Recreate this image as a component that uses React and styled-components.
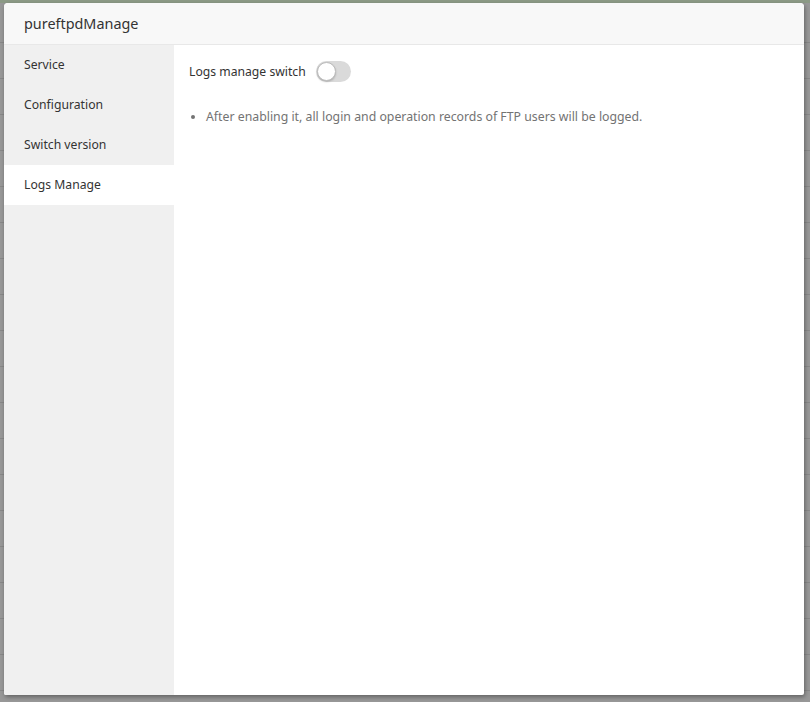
import React, { useState } from "react";
import styled, { createGlobalStyle } from "styled-components";

const GlobalStyle = createGlobalStyle`
  html, body {
    margin: 0;
    padding: 0;
    height: 100%;
  }
  body {
    font-family: "Noto Sans", "Open Sans", Arial, sans-serif;
    background: #989898;
    overflow: hidden;
  }
`;

const Backdrop = styled.div`
  width: 810px;
  height: 702px;
  box-sizing: border-box;
  padding: 3px 6px 7px 4px;
  background-color: #989898;
  background-image: linear-gradient(#8c9a86, #8c9a86),
    repeating-linear-gradient(
      to bottom,
      transparent 0px,
      transparent 35px,
      #888 35px,
      #888 36px
    );
  background-size: 100% 3px, 100% 100%;
  background-position: 0 0, 0 7px;
  background-repeat: no-repeat, repeat;
`;

const Modal = styled.div`
  height: 100%;
  display: flex;
  flex-direction: column;
  background: #fff;
  border-radius: 4px 4px 2px 2px;
  overflow: hidden;
  box-shadow: 1px 2px 4px rgba(0, 0, 0, 0.35);
`;

const Header = styled.div`
  height: 41px;
  flex-shrink: 0;
  display: flex;
  align-items: center;
  padding: 0 20px;
  background: #f8f8f8;
  border-bottom: 1px solid #e8e8e8;
  font-size: 14.4px;
  color: #333;
`;

const Body = styled.div`
  flex: 1;
  display: flex;
  min-height: 0;
`;

const Sidebar = styled.div`
  width: 170px;
  flex-shrink: 0;
  background: #f0f0f0;
  display: flex;
  flex-direction: column;
`;

const NavItem = styled.div`
  height: 40px;
  display: flex;
  align-items: center;
  padding-left: 20px;
  padding-bottom: 1px;
  box-sizing: border-box;
  font-size: 12.2px;
  color: #333;
  cursor: pointer;
  background: ${(p) => (p.$active ? "#fff" : "transparent")};
`;

const Content = styled.div`
  flex: 1;
  padding: 16px 15px;
`;

const SwitchRow = styled.div`
  display: flex;
  align-items: center;
  font-size: 12.2px;
  color: #333;
  gap: 10px;
`;

const Toggle = styled.button`
  position: relative;
  width: 35px;
  height: 21px;
  border: none;
  padding: 0;
  border-radius: 11px;
  background: ${(p) => (p.$on ? "#20a53a" : "#dadada")};
  cursor: pointer;
  transition: background 0.2s;
`;

const Knob = styled.span`
  position: absolute;
  top: 1px;
  left: ${(p) => (p.$on ? "15px" : "1px")};
  width: 19px;
  height: 19px;
  border-radius: 50%;
  background: #fff;
  box-sizing: border-box;
  border: 1px solid #bbb;
  box-shadow: 0 1px 2px rgba(0, 0, 0, 0.2);
  transition: left 0.2s;
`;

const Tips = styled.ul`
  margin: 26px 0 0;
  padding-left: 17px;
  font-size: 12.3px;
  color: #737373;
  line-height: 18px;
`;

const Tip = styled.li`
  padding-left: 0;
`;

const menu = ["Service", "Configuration", "Switch version", "Logs Manage"];

export default function App() {
  const [on, setOn] = useState(false);
  return (
    <>
      <GlobalStyle />
      <Backdrop>
        <Modal>
          <Header>pureftpdManage</Header>
          <Body>
            <Sidebar>
              {menu.map((m) => (
                <NavItem key={m} $active={m === "Logs Manage"}>
                  {m}
                </NavItem>
              ))}
            </Sidebar>
            <Content>
              <SwitchRow>
                Logs manage switch
                <Toggle $on={on} onClick={() => setOn(!on)}>
                  <Knob $on={on} />
                </Toggle>
              </SwitchRow>
              <Tips>
                <Tip>
                  After enabling it, all login and operation records of FTP users
                  will be logged.
                </Tip>
              </Tips>
            </Content>
          </Body>
        </Modal>
      </Backdrop>
    </>
  );
}
